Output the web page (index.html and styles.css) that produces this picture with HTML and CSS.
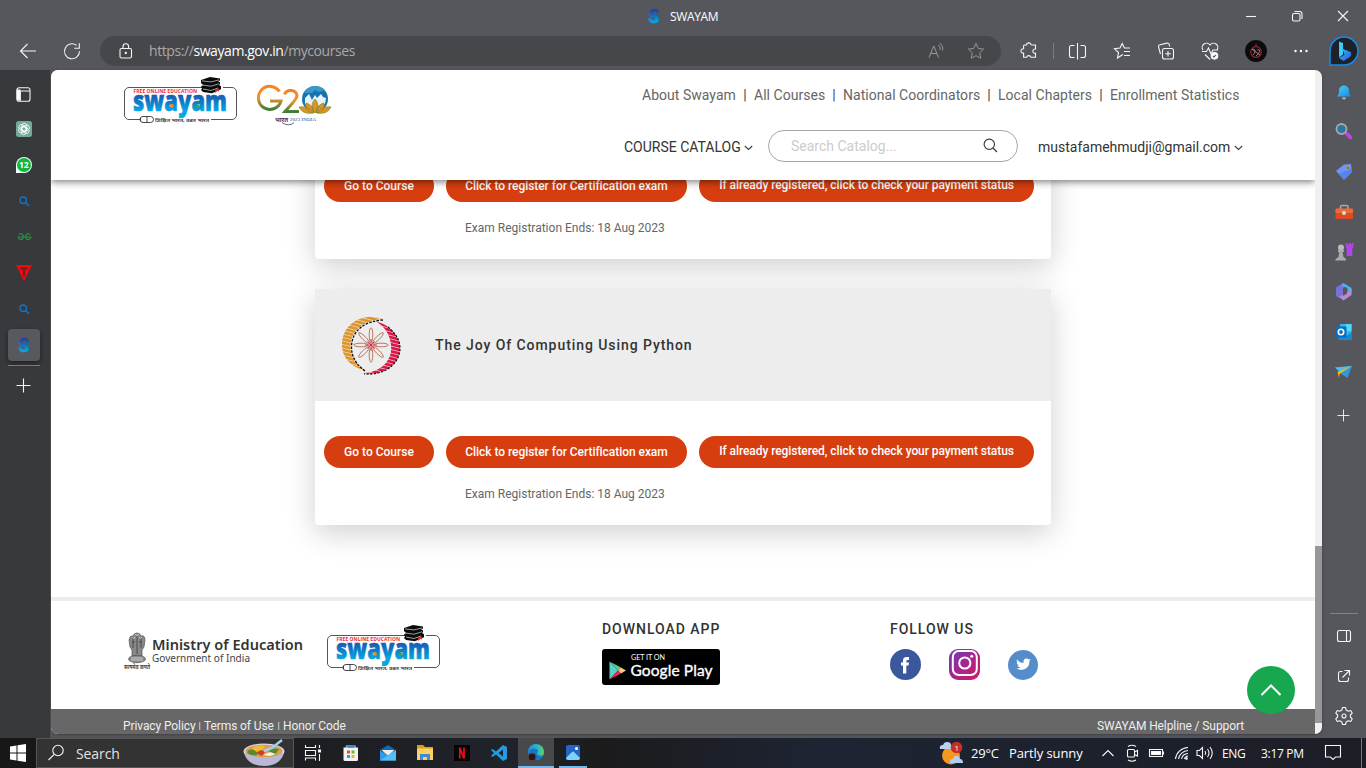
FILE: index.html
```html
<!DOCTYPE html>
<html lang="en">
<head>
<meta charset="utf-8">
<title>SWAYAM</title>
<link rel="stylesheet" href="styles.css">
</head>
<body>
<svg class="defs" width="0" height="0">
  <defs>
    <linearGradient id="blue" x1="0" y1="0" x2="0" y2="1"><stop offset=".25" stop-color="#2b3f9c"/><stop offset=".55" stop-color="#0b79c6"/><stop offset=".8" stop-color="#08a6e4"/></linearGradient>
    <linearGradient id="tri" x1="0" y1="0" x2="0" y2="1"><stop offset="0" stop-color="#f58220"/><stop offset=".5" stop-color="#f0932f"/><stop offset="1" stop-color="#3f7f35"/></linearGradient>
    <linearGradient id="bing" x1="0" y1="0" x2="1" y2="1"><stop offset="0" stop-color="#35c4f5"/><stop offset="1" stop-color="#2a55e8"/></linearGradient>
    <linearGradient id="insta" x1="0" y1="0" x2="1" y2="1"><stop offset="0" stop-color="#6b3fb5"/><stop offset=".5" stop-color="#a8258f"/><stop offset="1" stop-color="#d8175f"/></linearGradient>
    <linearGradient id="edge" x1="0" y1="0" x2="1" y2="0"><stop offset="0" stop-color="#1b8fdd"/><stop offset=".6" stop-color="#2fb6c9"/><stop offset="1" stop-color="#5fd65a"/></linearGradient>
    <linearGradient id="bell" x1="0" y1="0" x2="1" y2="1"><stop offset="0" stop-color="#4cd0fb"/><stop offset="1" stop-color="#1588dc"/></linearGradient>
    <pattern id="gold" width="8" height="3.4" patternUnits="userSpaceOnUse" patternTransform="rotate(14)"><rect width="8" height="2.8" fill="#dd9428"/></pattern>
    <pattern id="crimson" width="8" height="3.4" patternUnits="userSpaceOnUse" patternTransform="rotate(14)"><rect width="8" height="2.8" fill="#dc1746"/></pattern>
    <symbol id="s" viewBox="0 0 12 16"><text x=".6" y="14.600" font-family="Inter, sans-serif" font-weight="800" font-size="18.500" textLength="10.800" lengthAdjust="spacingAndGlyphs" fill="url(#blue)" stroke="url(#blue)" stroke-width=".7">S</text></symbol>
    <symbol id="swayam" viewBox="0 0 116 50">
      <path d="M17 43.500H6a4.500 4.500 0 0 1-4.500-4.500V16a4.500 4.500 0 0 1 4.500-4.500H79M100 11.500h9a4.500 4.500 0 0 1 4.500 4.500v23a4.500 4.500 0 0 1-4.500 4.500H88" fill="none" stroke="#555" stroke-width="1"/>
      <text x="10.500" y="16.700" font-family="Open Sans, sans-serif" font-weight="700" font-size="5" textLength="63.500" fill="#ee2a2f">FREE ONLINE EDUCATION</text>
      <text x="10" y="34.800" font-family="Open Sans, sans-serif" font-weight="800" font-size="29" textLength="94" lengthAdjust="spacingAndGlyphs" fill="url(#blue)" stroke="url(#blue)" stroke-width=".6">swayam</text>
      <circle cx="49" cy="30" r="1.900" fill="#f58220"/><circle cx="74.500" cy="30.500" r="1.900" fill="#39a744"/>
      <path d="M78 4l9-3 10 1.500v2l-2 .8 2 1v2l-1 .8 2 1.200v3l-9 4-9-1.300-2-2 1-1.500-1-2 2-1.500-2-2z" fill="#0a0a0a"/>
      <path d="M79 4.900l9 1 8-2M79 9l9 1.200 8-2.400M80 13l8 1.500 7-2.500" stroke="#ddd" stroke-width=".7" fill="none"/>
      <path d="M92 13.500l4-1v3l-2-.5-2 2z" fill="#e8202a"/>
      <path d="M20 40.500h7.500a3 3 0 0 1 0 6H20a3 3 0 0 1 0-6zM24 40.500v6M17.500 42v3" fill="#fff" stroke="#333" stroke-width=".9"/>
      <text x="32" y="45.500" font-family="Noto Sans Devanagari, Noto Sans, sans-serif" font-weight="700" font-size="5" textLength="54" lengthAdjust="spacingAndGlyphs" fill="#444">शिक्षित भारत, उन्नत भारत</text>
    </symbol>
    <symbol id="lens" viewBox="0 0 12 12"><circle cx="4.600" cy="4.600" r="3.500" fill="none" stroke="#1473c8" stroke-width="1.500"/><path d="M7.200 7.200l3.800 3.800" stroke="#1473c8" stroke-width="1.600"/></symbol>
  </defs>
</svg>

<header class="titlebar">
  <div class="tab-title"><svg width="12" height="16"><use href="#s"/></svg><span>SWAYAM</span></div>
  <div class="window-buttons">
    <svg width="46" height="32" class="line"><path d="M18 16.500h10"/></svg>
    <svg width="46" height="32" class="line"><rect x="18.500" y="13.500" width="7.500" height="7.500" rx="1.500"/><path d="M20.500 11.500h5a2.500 2.500 0 0 1 2.500 2.500v5"/></svg>
    <svg width="46" height="32" class="line"><path d="M18 11l10 10M28 11L18 21"/></svg>
  </div>
</header>

<div class="toolbar">
  <svg class="back line" width="18" height="18"><path d="M8.500 2L1.500 9l7 7M1.500 9H17"/></svg>
  <svg class="reload line" width="18" height="18"><path d="M16.500 9a7.500 7.500 0 1 1-3-6M16.300 1v5h-5" transform="translate(0 .3)"/></svg>
  <div class="address">
    <svg width="14" height="16" class="line"><rect x="1" y="5.500" width="11.500" height="9.500" rx="1.500"/><path d="M4 5.500V3.500a2.800 2.800 0 0 1 5.600 0v2"/><circle cx="6.800" cy="10" r=".6" fill="#fff"/></svg>
    <div class="url">https://<b>swayam.gov.in</b>/mycourses</div>
    <svg width="18" height="18" class="line dim"><path d="M2 15.500L6.800 4l4.700 11.500M3.600 11.500h6.300M11 3a4 4 0 0 1 2 5M12.500 1a7 7 0 0 1 3 7.500"/></svg>
    <svg width="18" height="18" class="line dim star"><path d="M9 1.500l2.300 4.900 5.300.7-3.900 3.700 1 5.400L9 13.600l-4.700 2.600 1-5.400L1.400 7.100l5.300-.7z"/></svg>
  </div>
  <svg width="52" height="38" viewBox="-2 0 52 38" class="line"><path d="M21.500 13.500h2a2.300 2.300 0 0 1 4.500-.5 1 1 0 0 0 1 .5h3.500v4a2.200 2.200 0 1 0 0 4.300v4h-4.500a2.300 2.300 0 0 0-4.400 0h-3v-4.200a2.200 2.200 0 1 1 0-4.300v-2.800a1 1 0 0 1 .9-1z" transform="translate(0 -.5)"/></svg>
  <i class="tool-sep"></i>
  <svg width="46" height="38" class="line"><path d="M20.500 13.500h-3a2 2 0 0 0-2 2v8a2 2 0 0 0 2 2h3M26.500 13.500h3a2 2 0 0 1 2 2v8a2 2 0 0 1-2 2h-3M23.500 11v16.500"/></svg>
  <svg width="44" height="38" class="line"><path d="M23 22.500l-1 .5-4.500 3 1-5.500-4-3.800 5.500-.7 2.200-4.500 2.200 4.500h5.500M24 19.500h6M24 23.500h6"/></svg>
  <svg width="44" height="38" class="line"><rect x="18.500" y="16.500" width="11" height="10.500" rx="2"/><path d="M24 19v5.500M21.300 21.800h5.500M16.500 22l-2-7a2 2 0 0 1 1.500-2.300l7-1.600a2 2 0 0 1 2.200 1.200l.5 2.200"/></svg>
  <svg width="44" height="38" class="line"><path d="M15 18a4.200 4.200 0 0 1 7-5 4.200 4.200 0 0 1 7 5M14 19.500h4.500l2-3.500 2.500 6 2-4h5M17 22.500l5 5"/><circle cx="26.500" cy="23.800" r="3.300" fill="#fff"/><path d="M25 24l1 1 2-2.200" stroke="#555"/></svg>
  <svg width="48" height="38"><circle cx="24" cy="19" r="11.500" fill="#0c0c0e" stroke="#777" stroke-width=".6"/><circle cx="24" cy="20" r="5.300" fill="none" stroke="#92242c" stroke-width="1.200"/><path d="M24 11l-1 3h2z" fill="#92242c"/><path d="M20 18q3-2 3 1t-2 4M25 18q4-1 2 3l-3 3M20 17l8 6" stroke="#bd8084" stroke-width=".9" fill="none"/></svg>
  <svg width="42" height="38" fill="#fff"><circle cx="15.500" cy="19" r="1.200"/><circle cx="21" cy="19" r="1.200"/><circle cx="26.500" cy="19" r="1.200"/></svg>
  <svg width="44" height="38"><path d="M8 33V19a14 14 0 1 1 14 14z" fill="#1f2129" stroke="#178be6" stroke-width="1.500"/><path d="M17 9.500l4 1.500v11.500l-4 3z" fill="#3ccbf4"/><path d="M17 26l5.500-3.300-2-6 8 3.300a4 4 0 0 1-.5 5l-6.500 4z" fill="url(#bing)"/></svg>
</div>

<div class="workspace">
  <aside class="tabs">
    <div class="slot first"><svg width="15" height="15" class="line"><path d="M3 .8h9a2 2 0 0 1 2 2v9.400a2 2 0 0 1-2 2H3a2 2 0 0 1-2-2V2.800a2 2 0 0 1 2-2zM4.300 4v10M1 4h13"/><path d="M1 3h3v10H2.500L1 12z" fill="#fff"/></svg></div>
    <div class="slot"><svg width="16" height="16"><rect width="16" height="16" rx="2.500" fill="#74aa9c"/><g fill="none" stroke="#fff" stroke-width=".8"><rect x="5.800" y="2.300" width="5" height="8" rx="2.500" /><rect x="5.800" y="2.300" width="5" height="8" rx="2.500" transform="rotate(60 8 8)"/><rect x="5.800" y="2.300" width="5" height="8" rx="2.500" transform="rotate(120 8 8)"/><rect x="5.800" y="2.300" width="5" height="8" rx="2.500" transform="rotate(180 8 8)"/><rect x="5.800" y="2.300" width="5" height="8" rx="2.500" transform="rotate(240 8 8)"/><rect x="5.800" y="2.300" width="5" height="8" rx="2.500" transform="rotate(300 8 8)"/></g></svg></div>
    <div class="slot"><svg width="16" height="16"><path d="M0 16V8a8 8 0 1 1 8 8z" fill="#f3fff6"/><circle cx="8" cy="8" r="7" fill="#10b83f"/><text x="3" y="11" font-family="Open Sans, sans-serif" font-weight="700" font-size="8.500" fill="#fff">12</text></svg></div>
    <div class="slot"><svg width="11" height="11"><use href="#lens"/></svg></div>
    <div class="slot"><svg width="15" height="8"><path d="M1.500 1.200C5.500-.2 6.700 2 6.300 4.500 5.300 7.700 1.700 7.200 1.200 4M13.500 1.200C9.500-.2 8.300 2 8.700 4.500 9.700 7.700 13.300 7.200 13.800 4M.5 4h14" fill="none" stroke="#2f9145" stroke-width="1.100"/></svg></div>
    <div class="slot"><svg width="16" height="16"><path d="M0 0h16L8 16z" fill="#f90606"/><path d="M4.500 3.500h7M8 3.500v8" stroke="#632222" stroke-width="1.900"/></svg></div>
    <div class="slot"><svg width="11" height="11"><use href="#lens"/></svg></div>
    <div class="slot"><div class="active-tab"><svg width="12" height="16"><use href="#s"/></svg></div></div>
    <i class="tab-rule"></i>
    <svg width="16" height="16" class="line plus"><path d="M7.500 .5v14M.5 7.500h14"/></svg>
  </aside>

  <div class="viewport">
    <div class="page">
      <div class="site-header">
        <div class="brand">
          <svg width="116" height="50"><use href="#swayam"/></svg>
          <svg width="78" height="46" viewBox="0 0 78 46">
            <path d="M23.500 10.500A11.500 11.500 0 1 0 25 20H14" fill="none" stroke="url(#tri)" stroke-width="3"/>
            <path d="M28.500 13.500a6.500 6 0 0 1 12.500 1c0 4-6 9-12 16h14" fill="none" stroke="url(#tri)" stroke-width="3"/>
            <circle cx="59" cy="18" r="13" fill="#1674ae"/><path d="M48 12a13 13 0 0 1 21-3l-6 2-4-2-3 3z" fill="#3d96c8"/>
            <path d="M49 17l4-4 2 4 1 2 3-5 2 3 4-4 2 3 3 1-1 6-5 1-4 3-2-3-4 3-5-4z" fill="#e9f3f7"/>
            <path d="M59 18c4 4 4 10 0 14-4-4-4-10 0-14zM50 22c5 1 7 5 8 10-6 0-9-4-8-10zM68 22c-5 1-7 5-8 10 6 0 9-4 8-10zM43 26c6-1 11 1 14 6-6 1-11 0-14-6zM75 26c-6-1-11 1-14 6 6 1 11 0 14-6z" fill="#d99628" stroke="#76832b" stroke-width=".6"/>
            <text x="19" y="41" font-family="Noto Sans Devanagari, Noto Sans, sans-serif" font-weight="700" font-size="6" textLength="13" lengthAdjust="spacingAndGlyphs" fill="#34346d">भारत</text>
            <text x="34" y="40" font-family="Liberation Serif, serif" font-size="5" textLength="26" fill="#34346d">2023 INDIA</text><path d="M26 41.500c4 3 9 3 12 0" stroke="#34346d" stroke-width=".8" fill="none"/>
          </svg>
        </div>
        <div class="header-right">
          <nav class="top-nav"><a class="w94">About Swayam</a><i>|</i><a class="w71">All Courses</a><i>|</i><a class="w137">National Coordinators</a><i>|</i><a class="w94">Local Chapters</a><i>|</i><a class="w129">Enrollment Statistics</a></nav>
          <div class="header-tools">
            <span class="catalog">COURSE CATALOG</span><svg class="chev" width="9" height="6"><path d="M.8 1l3.700 3.500L8.200 1"/></svg>
            <div class="search"><span>Search Catalog...</span><svg width="15" height="15"><circle cx="6.300" cy="6.300" r="5.200"/><path d="M10 10l4 4"/></svg></div>
            <span class="user">mustafamehmudji@gmail.com</span><svg class="chev" width="9" height="6"><path d="M.8 1l3.700 3.500L8.200 1"/></svg>
          </div>
        </div>
      </div>

      <main class="courses">
        <section class="card card-top">
          <div class="card-body">
            <div class="actions"><a class="btn go">Go to Course</a><a class="btn reg">Click to register for Certification exam</a><a class="btn pay">If already registered, click to check your payment status</a></div>
            <p class="ends">Exam Registration Ends: 18 Aug 2023</p>
          </div>
        </section>
        <section class="card">
          <div class="card-head">
            <svg width="60" height="60" viewBox="-30 -30 60 60">
              <path d="M12-26C-8-33-29-22-29 0-29 14-18 23-6 25-18 18-22 8-20-3-18-16-6-25 12-26z" fill="url(#gold)"/>
              <path d="M12-25C-6-24-17-15-19-3-21 8-17 18-6 26" fill="none" stroke="#111" stroke-width="1.300" stroke-dasharray="2.500 1.300"/>
              <path d="M4-24C20-20 29-8 29 3 29 20 12 32-9 28 10 28 22 15 20 0 19-10 14-19 4-24z" fill="url(#crimson)"/>
              <path d="M17-18C26-10 29-4 29 3 29 19 13 31-7 28.800" fill="none" stroke="#111" stroke-width="1.200" stroke-dasharray="2.200 1.500"/>
              <g fill="none" stroke="#b76b4f" stroke-width=".9">
                <g id="petals"><ellipse cy="-10" rx="1.800" ry="7.300"/><ellipse cy="10" rx="1.800" ry="7.300"/><ellipse cx="-10" rx="7.300" ry="1.800"/><ellipse cx="10" rx="7.300" ry="1.800"/></g>
                <use href="#petals" transform="rotate(45)"/>
              </g>
              <path d="M0-6V6M-6 0H6M-3.500-3.500l7 7M3.500-3.500l-7 7" stroke="#cf2449" stroke-width=".9"/>
            </svg>
            <h2>The Joy Of Computing Using Python</h2>
          </div>
          <div class="card-body">
            <div class="actions"><a class="btn go">Go to Course</a><a class="btn reg">Click to register for Certification exam</a><a class="btn pay">If already registered, click to check your payment status</a></div>
            <p class="ends">Exam Registration Ends: 18 Aug 2023</p>
          </div>
        </section>
      </main>

      <footer class="footer">
        <svg class="ministry" width="182" height="42" viewBox="0 0 182 42">
          <g stroke="#555" stroke-width=".7" fill="#888"><path d="M5 8q1-5 4-4 1-3 4-3t4 3q4-1 4 4l-1 7-2 3v6H8v-6l-2-3z"/><ellipse cx="13" cy="27" rx="8.500" ry="3.700"/><path d="M9 5v11M13 4v18M17 5v11M8 10h3M15 10h3" stroke="#333" fill="none"/><path d="M8 5q2 3 3 0M15 5q2 3 3 0M11 2q2 3 4 0M7 26h12M7 28h12" stroke="#eee" fill="none"/></g>
          <text x="0" y="36.500" font-family="Noto Sans Devanagari, Noto Sans, sans-serif" font-weight="700" font-size="5.500" textLength="26" lengthAdjust="spacingAndGlyphs" fill="#444">सत्यमेव जयते</text>
          <text x="28" y="18" font-family="Noto Sans, sans-serif" font-weight="600" font-size="14.500" textLength="151" fill="#333">Ministry of Education</text>
          <text x="28" y="29.500" font-family="Noto Sans, sans-serif" font-size="10" textLength="98" fill="#444">Government of India</text>
        </svg>
        <svg class="foot-logo" width="116" height="50"><use href="#swayam"/></svg>
        <div class="download">
          <h3>DOWNLOAD APP</h3>
          <svg width="118" height="36"><rect width="118" height="36" rx="3"/><path d="M7.500 12.500v18L16 21.500z" fill="#55cfd0"/><path d="M7.500 12.500L19 18.500l-3 3z" fill="#4fd08b"/><path d="M19 18.500l5 3-5 3-3-3z" fill="#f7c57b"/><path d="M7.500 30.500l11.500-6-3-3z" fill="#e8285e"/><text x="29" y="11" font-family="Lato, sans-serif" font-size="7.200" textLength="34" fill="#fff">GET IT ON</text><text x="28.500" y="27" font-family="Lato, sans-serif" font-size="15.500" textLength="82" fill="#fff" stroke="#fff" stroke-width=".35">Google Play</text></svg>
        </div>
        <div class="follow">
          <h3>FOLLOW US</h3>
          <div class="social">
            <svg width="31" height="31"><circle cx="15.500" cy="15.500" r="15.500" fill="#3a589b"/><path d="M13 24.500v-8h-2v-3h2v-2q0-3.500 3.500-3.500H19v3h-1.500q-1.200 0-1.200 1.200v1.300H19l-.5 3h-2.200v8z" fill="#fff"/></svg>
            <svg width="31" height="31"><rect width="31" height="31" rx="9" fill="url(#insta)"/><rect x="3.800" y="2" width="24" height="24" rx="6" fill="none" stroke="#fff" stroke-width="2"/><circle cx="15.800" cy="14" r="5.600" fill="none" stroke="#fff" stroke-width="2"/><circle cx="22.800" cy="7.300" r="1.500" fill="#fff"/></svg>
            <svg width="30" height="31"><circle cx="15" cy="16" r="15" fill="#558dca"/><path d="M9 10.500q3 3.500 6.500 3.500-.5-4.500 3-4.500 1.500 0 2.500 1l1.500-.5-1 2c0 6-4 8.800-8 8.800-2 0-4-.5-5-1.300 2 0 3-.5 4-1.300-2 0-2.500-1-3-2h1.200q-2-.8-2-3h1q-1.500-1-.7-2.700z" fill="#fff"/></svg>
          </div>
        </div>
      </footer>
      <div class="legal"><div class="legal-links"><a class="w72">Privacy Policy</a><i>|</i><a class="w70">Terms of Use</a><i>|</i><a>Honor Code</a></div><a class="helpline">SWAYAM Helpline / Support</a></div>
      <div class="to-top"><svg width="22" height="14"><path d="M1.500 12L11 2.500l9.500 9.500"/></svg></div>
    </div>
    <div class="scrollbar"><div class="thumb"></div></div>
  </div>

  <aside class="edge-bar">
    <svg width="44" height="40"><path d="M15 24.500c2-2 2-4 2-6a5 5 0 0 1 10 0c0 2 0 4 2.300 6z" fill="url(#bell)"/><path d="M20 25.500h4q0 2-2 2t-2-2z" fill="#bbb"/></svg>
    <svg width="44" height="40"><path d="M24.500 21.500l4 4" stroke="#c640e4" stroke-width="3.500" stroke-linecap="round"/><circle cx="19.500" cy="17" r="5" fill="#2777a2" stroke="#aaa8a5" stroke-width="1.800"/></svg>
    <svg width="44" height="40"><path d="M14 19l8-6.500 7-.5 1 8-8 8z" fill="#6c95f8"/><path d="M17 22l13-6v4l-8 8z" fill="#4a77ea" opacity=".6"/><circle cx="26" cy="16" r="1.400" stroke="#ddb128" fill="#333"/></svg>
    <svg width="44" height="40"><path d="M18.500 17v-2q0-1.500 2-1.500h3.500q2 0 2 1.500v2" fill="none" stroke="#aaa" stroke-width="1.500"/><rect x="13.500" y="17" width="17.500" height="10" rx="1" fill="#d94c24"/><rect x="13.500" y="16.500" width="17.500" height="4.500" rx="1" fill="#f06a38"/><circle cx="22" cy="21" r="2" fill="#ddd"/></svg>
    <svg width="44" height="40"><circle cx="19" cy="15.500" r="3" fill="#bbb"/><path d="M16 18h6v2h-1.500l1 5 2.500 2v1.500H13.500V27l3-2 .7-5H16z" fill="#aaa"/><path d="M23.500 11h2v1.500h1.500V11h2v1.500H30V11h1.500l-.5 5-1 1 .5 7h-6l.5-7-1-1z" fill="#b044ee"/></svg>
    <svg width="44" height="40"><path d="M14 15.500l7-4.500 4 2-4 3v7l-4 3-3-2z" fill="#7872d8"/><path d="M21 11l8.500 5v5l-4-2v-3L20 14z" fill="#4ab2ee"/><path d="M17 25l8-5 4.500-3v6L21.500 28.500z" fill="#b78ad6"/><path d="M21 17.500l4 1v3l-4 2.500z" fill="#56575c"/></svg>
    <svg width="44" height="40"><path d="M18 12h11.500v15.500H18z" fill="#34b6ef"/><path d="M16 22l7 3 7-5v7.500H16z" fill="#1689ce"/><path d="M24 12h5.500v7H24z" fill="#50d9ff"/><rect x="13.500" y="14.500" width="11" height="11" rx="1" fill="#086ebf"/><circle cx="19" cy="20" r="2.700" stroke="#fff" stroke-width="1.600" fill="none"/></svg>
    <svg width="44" height="40"><path d="M13 15.500L30 14l-4.500 12-7-4.500z" fill="#3495df"/><path d="M13 15.500L30 14l-12 5.500z" fill="#4ac0ed"/><path d="M30 14l-12.500 8-.5 4-1.500-6z" fill="#efb525"/></svg>
    <svg width="44" height="46" class="line thin"><path d="M21.500 17.500v12M15.500 23.500h12"/></svg>
    <i class="edge-rule"></i>
    <svg width="44" height="40" class="line"><rect x="15.500" y="14.500" width="13" height="11" rx="2"/><path d="M24.500 14.500v11"/></svg>
    <svg width="44" height="40" class="line"><path d="M20.500 15.500h-2a2 2 0 0 0-2 2v6a2 2 0 0 0 2 2h6a2 2 0 0 0 2-2v-2M22.500 14.500h5v5M27.500 14.500l-7 7"/></svg>
    <svg width="44" height="40" class="line"><path d="M20.500 12h3l.7 2.500 2 1.200 2.500-.7 1.500 2.600-1.800 1.900v2l1.800 1.900-1.500 2.600-2.500-.7-2 1.200-.7 2.500h-3l-.7-2.500-2-1.200-2.500.7-1.500-2.600 1.800-1.900v-2l-1.800-1.900 1.500-2.600 2.500.7 2-1.200z" stroke-linejoin="round" transform="translate(0 -.5)"/><circle cx="22" cy="20" r="2"/></svg>
  </aside>
</div>

<div class="taskbar">
  <svg width="36" height="30"><path d="M10 8.500l6.500-1v7H10zM17.500 7.300L26 6v8.500h-8.500zM10 15.500h6.500v7l-6.500-1zM17.500 15.500H26V24l-8.500-1.300z" fill="#fff"/></svg>
  <div class="task-search">
    <svg width="18" height="18" class="line"><circle cx="11" cy="6.500" r="5.200"/><path d="M7.200 10.300L1.500 16"/></svg><span>Search</span>
    <svg width="44" height="28"><ellipse cx="22" cy="12.500" rx="20.500" ry="8" fill="#d5d3e8"/><path d="M2 14q4 13 20 13t20-13z" fill="#bbb7d7"/><ellipse cx="22" cy="12" rx="18.500" ry="6.300" fill="#d8a04a"/><path d="M10 10q5-5 13-3l-3 4-8 2z" fill="#f3bd2c"/><path d="M5 13q3-4 7-2t3 5q-7 1-10-3zM28 9l9 1-4 6-6-2z" fill="#568a34"/><path d="M14 14l5-3 4 2-3 4z" fill="#ce3e2a"/><path d="M21 16l7-3 6 2-6 2z" fill="#f7efdf"/><path d="M22 12l8-3L40 1" stroke="#a5cdf2" stroke-width="2.500" fill="none"/></svg>
  </div>
  <div class="apps">
    <svg width="37" height="30" class="line"><path d="M10.500 7v2.500h10V7M10.500 22.500V20h10v2.500M10.500 12.500h10v5h-10zM24.500 7v3M24.500 16v7"/><path d="M23.500 12h2v2h-2z" fill="#fff"/></svg>
    <svg width="37" height="30"><path d="M14.500 10V8h8.500v2" stroke="#49b1dc" fill="none" stroke-width="1.500"/><path d="M11.500 9.500H26v12q0 1.500-1.500 1.500H13q-1.500 0-1.500-1.500z" fill="#f3f3f3"/><path d="M15 12.500h3v3h-3z" fill="#e84d28"/><path d="M19.500 12.500h3v3h-3z" fill="#7bb31c"/><path d="M15 17h3v3h-3z" fill="#2a9de2"/><path d="M19.500 17h3v3h-3z" fill="#f2b51e"/></svg>
    <svg width="37" height="30"><path d="M11 12l8-5 8 5z" fill="#1366b0"/><path d="M12.500 12h13l-6.500 6z" fill="#eee"/><path d="M11 12l8 5.500 8-5.500v10.500H11z" fill="#2f9be9"/><path d="M11 22.500l16-10.500v10.500z" fill="#50bff3"/></svg>
    <svg width="37" height="30"><path d="M11 7h6l2 2h8v3H11z" fill="#dd9c1f"/><path d="M11 10.500h16v11.500H11z" fill="#fbd165"/><path d="M14 22v-6h10v6h-3v-3h-4v3z" fill="#3d8dd4"/></svg>
    <svg width="37" height="30"><path d="M11 7h16v16H11z" fill="#050505"/><path d="M16.800 9.500v11M21 9.500v11M16.800 9.500l4.200 11" stroke="#df101c" stroke-width="1.800"/></svg>
    <svg width="37" height="30"><path d="M23 7l4 2v12l-4 2-7-6.500-3.500 2.500-1.500-1 3-3-3-3 1.500-1 3.500 2.500zM23 11.500l-4.500 3.500 4.500 3.500z" fill="#229be3" fill-rule="evenodd"/></svg>
    <svg class="running" width="36" height="30"><circle cx="18" cy="14" r="8" fill="url(#edge)"/><path d="M10.500 14q3-5 8-3 3 2 0 5 3 3 7 1-2 5-7 5-7 0-8-8z" fill="#1478c9"/><circle cx="14" cy="19" r="4" fill="#221b20" stroke="#6d4342"/></svg>
    <svg width="37" height="30" class="photos"><rect x="11" y="7" width="14" height="15" rx="2" fill="#2564c5"/><path d="M11 20l6-6q1-1 2 0l6 6q0 2-2 2H13q-2 0-2-2z" fill="#7ed2fb"/><circle cx="21.500" cy="10.500" r="1.500" fill="#fff"/></svg>
  </div>
  <div class="tray">
    <svg width="26" height="26"><circle cx="13" cy="15.500" r="9" fill="#f6981d"/><path d="M2 9q-1-4 3-4 1-3 4-3 4 0 4 3 3 0 2 4z" fill="#bcd0f2"/><path d="M12 23q-1-4 3-4 1-4 5-3 2 1 2 3 3 0 3 4z" fill="#b5cdf3"/><circle cx="18.500" cy="7.500" r="5.800" fill="#c72f22"/><text x="16.400" y="10.500" font-family="Open Sans, sans-serif" font-size="8" fill="#fff">1</text></svg>
    <span class="temp">29°C</span><span class="weather">Partly sunny</span>
    <svg width="24" height="30" class="line tray-chevron"><path d="M6.500 18l5.500-5.500 5.500 5.500"/></svg>
    <svg width="24" height="30" class="line"><rect x="7.500" y="11.500" width="7" height="7.500" rx="1"/><path d="M14.500 14l3-1.500v5.500l-3-1.500M8 8.500q4-2.500 8 0M8 22q4 2.500 8 0"/></svg>
    <svg width="26" height="30" class="line"><path d="M5.500 11.500h13v7h-13zM19.500 13.500v3"/><path d="M7.500 13.500h9v3h-9z" fill="#fff"/></svg>
    <svg width="24" height="30" class="line"><path d="M5.500 21A13 13 0 0 1 18 9.500M8.500 21a10 10 0 0 1 9.500-8.500M11.500 21A7 7 0 0 1 18 15.500M14.500 21a4 4 0 0 1 3.500-3"/><circle cx="16.500" cy="20.500" r=".8" fill="#fff"/></svg>
    <svg width="22" height="30" class="line"><path d="M3 12.500h2.500l3-3v11l-3-3H3zM11 13q1.500 2 0 4M13.500 11q3 4 0 8M16 9q4.500 6 0 12"/></svg>
    <span class="lang">ENG</span><span class="clock">3:17 PM</span>
    <svg width="58" height="30" class="line"><path d="M22.500 7.500h15v11.500h-5l-2.500 2.500-2.500-2.500h-5z"/></svg>
    <i class="desktop-edge"></i>
  </div>
</div>
</body>
</html>
```
FILE: styles.css
```css
* { box-sizing: border-box; }
body { margin: 0; width: 1366px; height: 768px; overflow: hidden; display: flex; flex-direction: column; background: #56575c; font-family: Roboto, sans-serif; }
svg { display: block; flex: none; }
i { font-style: normal; flex: none; }
a, span { white-space: nowrap; flex: none; }
.defs { position: absolute; }
.line { fill: none; stroke: #f5f5f5; stroke-width: 1.1; }
.thin { stroke-width: .9; }
.dim { stroke: #96979a; stroke-width: 1; }

.titlebar { height: 32px; flex: none; display: flex; justify-content: flex-end; align-items: center; }
.tab-title { display: flex; align-items: center; gap: 10px; width: 580px; font: 12px/16px "Open Sans", sans-serif; color: #fff; }
.tab-title span { letter-spacing: -.35px; padding-top: 1px; }
.window-buttons { display: flex; }

.toolbar { height: 38px; flex: none; display: flex; align-items: center; }
.back { margin-left: 19px; }
.reload { margin: 0 19px 0 26px; }
.address { width: 901px; height: 30px; border-radius: 15px; background: #46474a; display: flex; align-items: center; padding-left: 19px; }
.url { margin-left: 16px; width: 778px; font: 14px/20px "Open Sans", sans-serif; color: #a8a9ac; letter-spacing: -.42px; }
.url b { font-weight: 400; color: #fff; }
.star { margin-left: 22px; }
.tool-sep { width: 1px; height: 16px; background: #7b7c80; }

.workspace { flex: 1; min-height: 0; display: flex; }
.tabs { width: 51px; background: #38393c; border-right: 1px solid #505156; padding-top: 7px; }
.slot { width: 48px; height: 36px; display: flex; align-items: center; justify-content: center; }
.slot.first { width: 46px; height: 34px; }
.active-tab { width: 32px; height: 32px; border-radius: 4px; background: #58595e; box-shadow: 0 2px 4px #222; display: flex; align-items: center; justify-content: center; }
.tab-rule { display: block; width: 32px; height: 1px; margin: 2px 0 0 8px; background: #838487; }
.plus { margin: 12px 0 0 16px; }

.viewport { width: 1271px; height: 664px; display: flex; border-radius: 7px; overflow: hidden; box-shadow: 0 1px 3px #3e3f43; }
.page { width: 1264px; position: relative; display: flex; flex-direction: column; background: #fff; overflow: hidden; }
.scrollbar { width: 7px; background: #f0f0f0; padding-top: 476px; }
.thumb { height: 177px; background: #979797; }

.site-header { height: 110px; flex: none; display: flex; justify-content: space-between; position: relative; z-index: 1; background: #fff; box-shadow: 0 2px 7px rgba(0,0,0,.5); padding: 6px 71px 0 72px; }
.brand { display: flex; gap: 17px; }
.brand svg + svg { margin-top: 5px; }
.top-nav { display: flex; justify-content: flex-end; padding: 10px 5px 0 0; font-size: 14px; line-height: 18px; color: #666; letter-spacing: .03px; }
.top-nav i { width: 18px; text-align: center; color: #444; }
.w94 { width: 94px; } .w71 { width: 71px; } .w137 { width: 137px; } .w129 { width: 129px; } .w72 { width: 72px; } .w70 { width: 70px; }
.header-tools { display: flex; align-items: center; width: 620px; margin-top: 26px; height: 32px; font-size: 14px; color: #333; }
.catalog { width: 117px; padding-top: 2px; }
.chev { fill: none; stroke: #444; stroke-width: 1.2; margin: 3px 0 0 3px; }
.search { width: 250px; height: 32px; margin: 0 20px 0 15px; border: 1px solid #a5a5a5; border-radius: 16px; display: flex; align-items: center; justify-content: space-between; padding: 0 19px 0 22px; color: #ccc; }
.search svg { fill: none; stroke: #333; stroke-width: 1.1; margin-bottom: 2px; }
.user { width: 193px; padding-top: 2px; }

.courses { height: 417px; flex: none; display: flex; flex-direction: column; align-items: center; gap: 30px; }
.card { width: 736px; border-radius: 0 0 4px 4px; background: #fff; box-shadow: 0 8px 30px rgba(0,0,0,.19); }
.card-top { margin-top: -45px; }
.card-head { height: 112px; background: #ededed; display: flex; align-items: center; gap: 34px; padding-left: 26px; position: relative; }
.card-head h2 { margin: 0 0 1px; font-size: 14px; font-weight: 500; letter-spacing: .93px; color: #333; }
.card-body { height: 124px; padding: 35px 0 0 9px; }
.actions { display: flex; gap: 12px; }
.btn { height: 32px; border-radius: 16px; background: #d73e0f; color: #fff; font-size: 12px; font-weight: 500; line-height: 32px; text-align: center; letter-spacing: -.05px; }
.go { width: 110px; letter-spacing: 0; } .reg { width: 241px; } .pay { width: 335px; line-height: 30px; letter-spacing: -.07px; }
.ends { margin: 18px 0 0 141px; font-size: 12px; line-height: 16px; color: #666; }

.footer { height: 112px; flex: none; border-top: 4px solid #ededed; display: flex; align-items: flex-start; padding-left: 73px; }
.ministry { margin-top: 31px; }
.foot-logo { margin: 23px 0 0 20px; }
.footer h3 { margin: 0; font-size: 14px; font-weight: 500; line-height: 18px; letter-spacing: .97px; color: #333; white-space: nowrap; }
.download { margin: 19px 0 0 160px; width: 288px; }
.download svg { margin-top: 11px; }
.follow { margin-top: 19px; }
.social { display: flex; gap: 28px; margin-top: 11px; }
.legal { flex: 1; background: #676767; display: flex; justify-content: space-between; padding: 8px 71px 0 72px; color: #eee; font-size: 12px; line-height: 18px; letter-spacing: -.1px; }
.legal-links { display: flex; }
.legal-links i { width: 9px; text-align: center; font-size: 9px; }
.to-top { position: absolute; left: 1196px; top: 596px; width: 48px; height: 48px; border-radius: 50%; background: #17a84f; display: flex; align-items: center; justify-content: center; }
.to-top svg { fill: none; stroke: #fff; stroke-width: 2; }

.edge-bar { width: 44px; display: flex; flex-direction: column; padding: 2px 0; }
.edge-rule { width: 28px; height: 1px; background: #828386; margin: auto 8px 2px; }

.taskbar { height: 30px; flex: none; display: flex; background: linear-gradient(90deg, #171717, #1c1d20 20%, #20232a 38%, #1b1b1c 44%, #1e2433 60%, #1c1e26); color: #fff; font-family: "Open Sans", sans-serif; }
.task-search { width: 258px; height: 30px; border: 1px solid #565656; background: #333; display: flex; align-items: center; justify-content: space-between; padding: 0 7px 0 10px; }
.task-search span { flex: 1; margin-left: 11px; font-size: 14px; color: #e2e2e2; letter-spacing: -.1px; }
.apps { display: flex; margin-left: 1px; }
.running { background: #48494b; border-bottom: 2px solid #76b9ed; margin-left: 1px; }
.photos { margin-left: 1px; background: linear-gradient(#76b9ed, #76b9ed) 4px 28px / 28px 2px no-repeat; }
.tray { margin-left: auto; display: flex; align-items: center; font-size: 13px; height: 30px; }
.temp { width: 38px; margin-left: 7px; letter-spacing: -.2px; }
.weather { width: 76px; letter-spacing: -.1px; }
.tray-chevron { margin-left: 11px; }
.lang { width: 39px; margin-left: 6px; font-size: 12px; letter-spacing: -.3px; }
.clock { width: 42px; font-size: 12px; letter-spacing: -.3px; }
.desktop-edge { width: 5px; height: 30px; border-left: 1px solid #777; }
```
